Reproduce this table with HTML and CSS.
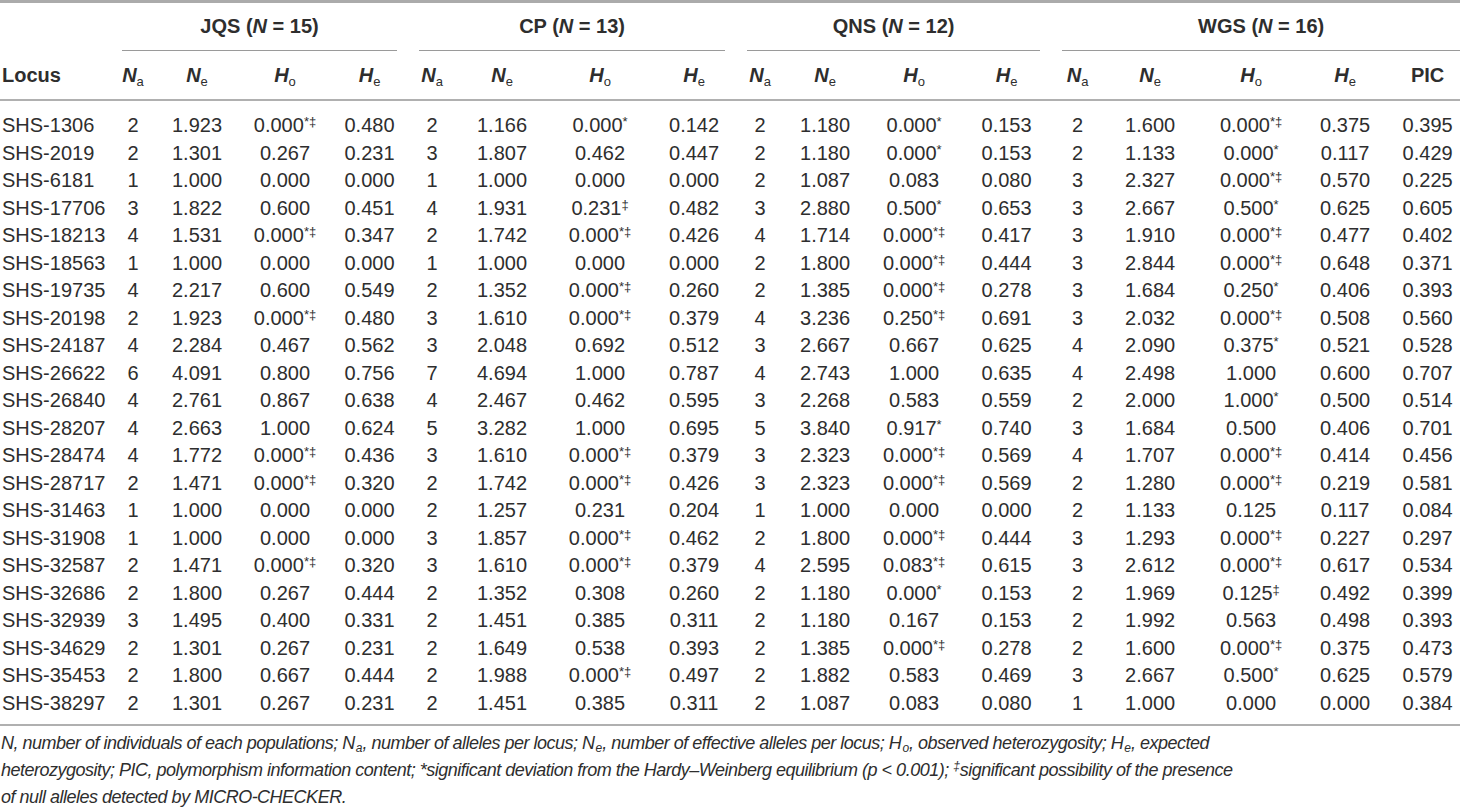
FILE: index.html
```html
<!DOCTYPE html>
<html lang="en">

<head>
    <meta charset="UTF-8">
    <title>Genetic diversity per locus</title>
    <link rel="stylesheet" href="styles.css">
</head>

<body>
    <table class="tbl">
        <colgroup>
            <col class="c-locus">
            <col class="c44"><col class="c84"><col class="c92"><col class="c77">
            <col class="c48"><col class="c92"><col class="c104"><col class="c84">
            <col class="c48"><col class="c82"><col class="c96"><col class="c89">
            <col class="c53"><col class="c92"><col class="c110"><col class="c78"><col class="c76">
        </colgroup>
        <thead>
            <tr class="grp-row">
                <th></th>
                <th colspan="4"><div class="grp">JQS (<i>N</i> = 15)</div></th>
                <th colspan="4"><div class="grp">CP (<i>N</i> = 13)</div></th>
                <th colspan="4"><div class="grp">QNS (<i>N</i> = 12)</div></th>
                <th colspan="5" class="last"><div class="grp">WGS (<i>N</i> = 16)</div></th>
            </tr>
            <tr class="col-row">
                <th class="locus">Locus</th>
                <th><i>N</i><sub>a</sub></th><th><i>N</i><sub>e</sub></th><th><i>H</i><sub>o</sub></th><th><i>H</i><sub>e</sub></th>
                <th><i>N</i><sub>a</sub></th><th><i>N</i><sub>e</sub></th><th><i>H</i><sub>o</sub></th><th><i>H</i><sub>e</sub></th>
                <th><i>N</i><sub>a</sub></th><th><i>N</i><sub>e</sub></th><th><i>H</i><sub>o</sub></th><th><i>H</i><sub>e</sub></th>
                <th><i>N</i><sub>a</sub></th><th><i>N</i><sub>e</sub></th><th><i>H</i><sub>o</sub></th><th><i>H</i><sub>e</sub></th>
                <th class="pic">PIC</th>
            </tr>
        </thead>
        <tbody>
            <tr><td>SHS-1306</td><td>2</td><td>1.923</td><td>0.000<sup>*‡</sup></td><td>0.480</td><td>2</td><td>1.166</td><td>0.000<sup>*</sup></td><td>0.142</td><td>2</td><td>1.180</td><td>0.000<sup>*</sup></td><td>0.153</td><td>2</td><td>1.600</td><td>0.000<sup>*‡</sup></td><td>0.375</td><td class="pic">0.395</td></tr>
            <tr><td>SHS-2019</td><td>2</td><td>1.301</td><td>0.267</td><td>0.231</td><td>3</td><td>1.807</td><td>0.462</td><td>0.447</td><td>2</td><td>1.180</td><td>0.000<sup>*</sup></td><td>0.153</td><td>2</td><td>1.133</td><td>0.000<sup>*</sup></td><td>0.117</td><td class="pic">0.429</td></tr>
            <tr><td>SHS-6181</td><td>1</td><td>1.000</td><td>0.000</td><td>0.000</td><td>1</td><td>1.000</td><td>0.000</td><td>0.000</td><td>2</td><td>1.087</td><td>0.083</td><td>0.080</td><td>3</td><td>2.327</td><td>0.000<sup>*‡</sup></td><td>0.570</td><td class="pic">0.225</td></tr>
            <tr><td>SHS-17706</td><td>3</td><td>1.822</td><td>0.600</td><td>0.451</td><td>4</td><td>1.931</td><td>0.231<sup>‡</sup></td><td>0.482</td><td>3</td><td>2.880</td><td>0.500<sup>*</sup></td><td>0.653</td><td>3</td><td>2.667</td><td>0.500<sup>*</sup></td><td>0.625</td><td class="pic">0.605</td></tr>
            <tr><td>SHS-18213</td><td>4</td><td>1.531</td><td>0.000<sup>*‡</sup></td><td>0.347</td><td>2</td><td>1.742</td><td>0.000<sup>*‡</sup></td><td>0.426</td><td>4</td><td>1.714</td><td>0.000<sup>*‡</sup></td><td>0.417</td><td>3</td><td>1.910</td><td>0.000<sup>*‡</sup></td><td>0.477</td><td class="pic">0.402</td></tr>
            <tr><td>SHS-18563</td><td>1</td><td>1.000</td><td>0.000</td><td>0.000</td><td>1</td><td>1.000</td><td>0.000</td><td>0.000</td><td>2</td><td>1.800</td><td>0.000<sup>*‡</sup></td><td>0.444</td><td>3</td><td>2.844</td><td>0.000<sup>*‡</sup></td><td>0.648</td><td class="pic">0.371</td></tr>
            <tr><td>SHS-19735</td><td>4</td><td>2.217</td><td>0.600</td><td>0.549</td><td>2</td><td>1.352</td><td>0.000<sup>*‡</sup></td><td>0.260</td><td>2</td><td>1.385</td><td>0.000<sup>*‡</sup></td><td>0.278</td><td>3</td><td>1.684</td><td>0.250<sup>*</sup></td><td>0.406</td><td class="pic">0.393</td></tr>
            <tr><td>SHS-20198</td><td>2</td><td>1.923</td><td>0.000<sup>*‡</sup></td><td>0.480</td><td>3</td><td>1.610</td><td>0.000<sup>*‡</sup></td><td>0.379</td><td>4</td><td>3.236</td><td>0.250<sup>*‡</sup></td><td>0.691</td><td>3</td><td>2.032</td><td>0.000<sup>*‡</sup></td><td>0.508</td><td class="pic">0.560</td></tr>
            <tr><td>SHS-24187</td><td>4</td><td>2.284</td><td>0.467</td><td>0.562</td><td>3</td><td>2.048</td><td>0.692</td><td>0.512</td><td>3</td><td>2.667</td><td>0.667</td><td>0.625</td><td>4</td><td>2.090</td><td>0.375<sup>*</sup></td><td>0.521</td><td class="pic">0.528</td></tr>
            <tr><td>SHS-26622</td><td>6</td><td>4.091</td><td>0.800</td><td>0.756</td><td>7</td><td>4.694</td><td>1.000</td><td>0.787</td><td>4</td><td>2.743</td><td>1.000</td><td>0.635</td><td>4</td><td>2.498</td><td>1.000</td><td>0.600</td><td class="pic">0.707</td></tr>
            <tr><td>SHS-26840</td><td>4</td><td>2.761</td><td>0.867</td><td>0.638</td><td>4</td><td>2.467</td><td>0.462</td><td>0.595</td><td>3</td><td>2.268</td><td>0.583</td><td>0.559</td><td>2</td><td>2.000</td><td>1.000<sup>*</sup></td><td>0.500</td><td class="pic">0.514</td></tr>
            <tr><td>SHS-28207</td><td>4</td><td>2.663</td><td>1.000</td><td>0.624</td><td>5</td><td>3.282</td><td>1.000</td><td>0.695</td><td>5</td><td>3.840</td><td>0.917<sup>*</sup></td><td>0.740</td><td>3</td><td>1.684</td><td>0.500</td><td>0.406</td><td class="pic">0.701</td></tr>
            <tr><td>SHS-28474</td><td>4</td><td>1.772</td><td>0.000<sup>*‡</sup></td><td>0.436</td><td>3</td><td>1.610</td><td>0.000<sup>*‡</sup></td><td>0.379</td><td>3</td><td>2.323</td><td>0.000<sup>*‡</sup></td><td>0.569</td><td>4</td><td>1.707</td><td>0.000<sup>*‡</sup></td><td>0.414</td><td class="pic">0.456</td></tr>
            <tr><td>SHS-28717</td><td>2</td><td>1.471</td><td>0.000<sup>*‡</sup></td><td>0.320</td><td>2</td><td>1.742</td><td>0.000<sup>*‡</sup></td><td>0.426</td><td>3</td><td>2.323</td><td>0.000<sup>*‡</sup></td><td>0.569</td><td>2</td><td>1.280</td><td>0.000<sup>*‡</sup></td><td>0.219</td><td class="pic">0.581</td></tr>
            <tr><td>SHS-31463</td><td>1</td><td>1.000</td><td>0.000</td><td>0.000</td><td>2</td><td>1.257</td><td>0.231</td><td>0.204</td><td>1</td><td>1.000</td><td>0.000</td><td>0.000</td><td>2</td><td>1.133</td><td>0.125</td><td>0.117</td><td class="pic">0.084</td></tr>
            <tr><td>SHS-31908</td><td>1</td><td>1.000</td><td>0.000</td><td>0.000</td><td>3</td><td>1.857</td><td>0.000<sup>*‡</sup></td><td>0.462</td><td>2</td><td>1.800</td><td>0.000<sup>*‡</sup></td><td>0.444</td><td>3</td><td>1.293</td><td>0.000<sup>*‡</sup></td><td>0.227</td><td class="pic">0.297</td></tr>
            <tr><td>SHS-32587</td><td>2</td><td>1.471</td><td>0.000<sup>*‡</sup></td><td>0.320</td><td>3</td><td>1.610</td><td>0.000<sup>*‡</sup></td><td>0.379</td><td>4</td><td>2.595</td><td>0.083<sup>*‡</sup></td><td>0.615</td><td>3</td><td>2.612</td><td>0.000<sup>*‡</sup></td><td>0.617</td><td class="pic">0.534</td></tr>
            <tr><td>SHS-32686</td><td>2</td><td>1.800</td><td>0.267</td><td>0.444</td><td>2</td><td>1.352</td><td>0.308</td><td>0.260</td><td>2</td><td>1.180</td><td>0.000<sup>*</sup></td><td>0.153</td><td>2</td><td>1.969</td><td>0.125<sup>‡</sup></td><td>0.492</td><td class="pic">0.399</td></tr>
            <tr><td>SHS-32939</td><td>3</td><td>1.495</td><td>0.400</td><td>0.331</td><td>2</td><td>1.451</td><td>0.385</td><td>0.311</td><td>2</td><td>1.180</td><td>0.167</td><td>0.153</td><td>2</td><td>1.992</td><td>0.563</td><td>0.498</td><td class="pic">0.393</td></tr>
            <tr><td>SHS-34629</td><td>2</td><td>1.301</td><td>0.267</td><td>0.231</td><td>2</td><td>1.649</td><td>0.538</td><td>0.393</td><td>2</td><td>1.385</td><td>0.000<sup>*‡</sup></td><td>0.278</td><td>2</td><td>1.600</td><td>0.000<sup>*‡</sup></td><td>0.375</td><td class="pic">0.473</td></tr>
            <tr><td>SHS-35453</td><td>2</td><td>1.800</td><td>0.667</td><td>0.444</td><td>2</td><td>1.988</td><td>0.000<sup>*‡</sup></td><td>0.497</td><td>2</td><td>1.882</td><td>0.583</td><td>0.469</td><td>3</td><td>2.667</td><td>0.500<sup>*</sup></td><td>0.625</td><td class="pic">0.579</td></tr>
            <tr><td>SHS-38297</td><td>2</td><td>1.301</td><td>0.267</td><td>0.231</td><td>2</td><td>1.451</td><td>0.385</td><td>0.311</td><td>2</td><td>1.087</td><td>0.083</td><td>0.080</td><td>1</td><td>1.000</td><td>0.000</td><td>0.000</td><td class="pic">0.384</td></tr>
        </tbody>
    </table>

    <p class="note">
        N, number of individuals of each populations; N<sub>a</sub>, number of alleles per locus; N<sub>e</sub>, number of effective alleles per locus; H<sub>o</sub>, observed heterozygosity; H<sub>e</sub>, expected heterozygosity; PIC, polymorphism information content; *significant deviation from the Hardy–Weinberg equilibrium (p &lt; 0.001); <sup>‡</sup>significant possibility of the presence of null alleles detected by MICRO-CHECKER.
    </p>
</body>

</html>
```

FILE: styles.css
```css
* {
    padding: 0;
    margin: 0;
}

body {
    background: #fff;
    color: #2e2e2e;
    font-family: "Liberation Sans", Arial, sans-serif;
    font-size: 20px;
}

.tbl {
    width: 1460px;
    table-layout: fixed;
    border-collapse: collapse;
    border-top: 3px solid #ababab;
}

/* column widths, read off the picture */
.c-locus { width: 111px; }
.c44 { width: 44px; }
.c48 { width: 48px; }
.c53 { width: 53px; }
.c76 { width: 76px; }
.c77 { width: 77px; }
.c78 { width: 78px; }
.c82 { width: 82px; }
.c84 { width: 84px; }
.c89 { width: 89px; }
.c92 { width: 92px; }
.c96 { width: 96px; }
.c104 { width: 104px; }
.c110 { width: 110px; }

.tbl th {
    font-weight: bold;
    text-align: center;
    line-height: 24px;
}

.tbl sub {
    font-size: 13px;
    font-weight: normal;
    vertical-align: -4px;
    line-height: 0;
}

.grp-row th {
    padding: 11px 11px 0;
}

.grp-row th.last {
    padding-right: 0;
}

.grp {
    padding-bottom: 12px;
    border-bottom: 1px solid #9a9a9a;
}

.col-row th {
    padding: 12px 0 12px;
    border-bottom: 2px solid #b0b0b0;
}

.col-row th.locus {
    text-align: left;
    padding-left: 2px;
}

.tbl td {
    text-align: center;
    line-height: 23.5px;
    padding: 2px 0;
    white-space: nowrap;
}

.tbl td:first-child {
    text-align: left;
    padding-left: 2px;
}

.tbl .pic {
    padding-left: 11px;
}

.tbl tbody tr:first-child td {
    padding-top: 13px;
}

.tbl tbody tr:last-child td {
    padding-bottom: 9px;
    border-bottom: 2px solid #b0b0b0;
}

.tbl sup {
    font-size: 13px;
    line-height: 0;
    vertical-align: 6px;
}

.note {
    width: 1245px;
    margin-top: 4px;
    font-size: 18px;
    letter-spacing: -0.5px;
    font-style: italic;
    line-height: 27px;
    padding-left: 1px;
}

.note sub {
    font-size: 12px;
    line-height: 0;
    vertical-align: -3px;
    margin-left: 1px;
    letter-spacing: 0;
}

.note sup {
    font-size: 12px;
    line-height: 0;
    vertical-align: 6px;
    letter-spacing: 0;
}
```
